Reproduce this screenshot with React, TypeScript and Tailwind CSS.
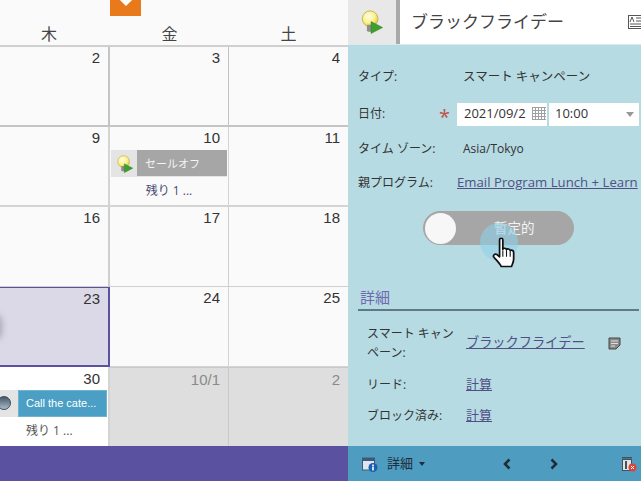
import React from 'react';

const font = "font-['Open_Sans','Noto_Sans_CJK_JP',sans-serif]";

const BulbIcon = ({ size = 26 }: { size?: number }) => (
  <svg width={size} height={size} viewBox="0 0 26 26">
    <defs>
      <radialGradient id="bulb" cx="0.4" cy="0.35" r="0.7">
        <stop offset="0" stopColor="#fffde0" />
        <stop offset="0.6" stopColor="#fbf08c" />
        <stop offset="1" stopColor="#dcbc3c" />
      </radialGradient>
    </defs>
    <circle cx="11" cy="9.5" r="8.5" fill="url(#bulb)" stroke="#c9b04a" strokeWidth="1" />
    <rect x="7.5" y="16" width="6" height="7.5" rx="1.5" fill="#8d9088" />
    <path d="M12 12.5 L24.5 19 L12 25.5 Z" fill="#3f9e2c" stroke="#2f7f20" strokeWidth="0.5" />
  </svg>
);

const DayCell = ({
  day,
  children,
  className = '',
  numClass = 'text-[#333]',
}: {
  day: string;
  children?: React.ReactNode;
  className?: string;
  numClass?: string;
}) => (
  <div className={`flex flex-col min-w-0 ${className}`}>
    <div className={`text-right text-[15px] leading-[20px] pt-[1px] pr-[8px] font-['Liberation_Sans',sans-serif] ${numClass}`}>{day}</div>
    {children}
  </div>
);

const More = ({ className = '' }: { className?: string }) => (
  <div className={`text-[12px] leading-[14px] text-[#4a4a72] ${className}`}>残り 1 ...</div>
);

const Row = ({ label, children, className = '' }: { label: string; children: React.ReactNode; className?: string }) => (
  <div className={`flex items-center ${className}`}>
    <span className="w-[105px] shrink-0 text-[#333]">{label}</span>
    {children}
  </div>
);

const Calendar = () => (
  <div className="w-[348px] shrink-0 flex flex-col bg-[#fafafa] overflow-hidden">
    <div className="h-[47px] relative shrink-0 border-b-2 border-[#cfcfcf]">
      <div className="absolute left-[110px] top-0 w-[31px] h-[16px] bg-[#e97a1c] flex justify-center">
        <div className="w-[10px] h-[10px] bg-white rotate-45 -mt-[6px]" />
      </div>
      <div className="absolute bottom-0 inset-x-0 grid grid-cols-[110px_119px_119px] text-center text-[16px] leading-[22px] text-[#444]">
        <span className="pr-[12px]">木</span>
        <span>金</span>
        <span>土</span>
      </div>
    </div>
    <div className="flex-1 grid grid-cols-[110px_119px_119px] grid-rows-[80px_80px_80px_80px_79px]">
      <DayCell day="2" className="border-r-2 border-b-2 border-[#c4c4c4]" />
      <DayCell day="3" className="border-r border-b-2 border-[#c4c4c4]" />
      <DayCell day="4" className="border-b-2 border-[#c4c4c4]" />

      <DayCell day="9" className="border-r-2 border-b-2 border-[#d4d4d4]" />
      <DayCell day="10" className="border-r border-b-2 border-[#d4d4d4]">
        <div className="flex h-[27px] mt-[2px] ml-[1px] mr-[1px] bg-[#e4e4e4]">
          <div className="w-[26px] shrink-0 flex items-center justify-center pl-[2px]">
            <BulbIcon size={18} />
          </div>
          <div className="flex-1 bg-[#a6a6a6] text-[#f4f4f4] text-[11px] leading-[27px] pl-[8px] mb-[1px]">セールオフ</div>
        </div>
        <More className="text-center mt-[7px]" />
      </DayCell>
      <DayCell day="11" className="border-b-2 border-[#d4d4d4]" />

      <DayCell day="16" className="border-r-2 border-b border-[#cfcfcf]" />
      <DayCell day="17" className="border-r border-b border-[#cfcfcf]" />
      <DayCell day="18" className="border-b border-[#cfcfcf]" />

      <div className="relative overflow-hidden border-t border-r-2 border-b-2 border-[#5a52a0] bg-[#dbd9e8]">
        <DayCell day="23" />
        <div className="absolute left-[-14px] top-[26px] w-[16px] h-[26px] rounded-full bg-[#a9a8b4] blur-[3px]" />
      </div>
      <DayCell day="24" className="border-r border-b border-[#d4d4d4]" />
      <DayCell day="25" className="border-b border-[#d4d4d4]" />

      <DayCell day="30" numClass="text-[#333] mt-[1px]" className="bg-white border-r-2 border-[#d4d4d4]">
        <div className="flex h-[27px] mt-[1px] mr-[1px] bg-[#e4e4e4]">
          <div className="w-[18px] shrink-0 relative overflow-hidden">
            <div className="absolute left-[-3px] top-[6px] w-[14px] h-[14px] rounded-full bg-gradient-to-b from-[#47586a] to-[#a9bccb] border border-[#3d4a58]" />
          </div>
          <div className="flex-1 bg-[#4b9fc4] text-white text-[11px] leading-[25px] pl-[7px] border border-[#6db4d3] font-['Liberation_Sans',sans-serif]">Call the cate...</div>
        </div>
        <More className="pl-[26px] text-[#555] mt-[7px]" />
      </DayCell>
      <DayCell day="10/1" numClass="text-[#8a8a8a] mt-[1px]" className="bg-[#dedede] border-r border-t border-[#c9c9c9]" />
      <DayCell day="2" numClass="text-[#8a8a8a] mt-[1px]" className="bg-[#dedede] border-t border-[#c9c9c9]" />
    </div>
    <div className="h-[35px] shrink-0 bg-[#5a52a0]" />
  </div>
);

const Panel = () => (
  <div className="flex-1 min-w-0 flex flex-col bg-[#b6dbe3] text-[12px] overflow-hidden">
    <div className="h-[45px] shrink-0 flex items-center bg-white border-b border-[#d8ecf0]">
      <div className="w-[52px] h-full shrink-0 bg-[#e8e8e8] border-r-[4px] border-[#a9a9a9] flex items-center justify-center">
        <BulbIcon size={24} />
      </div>
      <span className="ml-[11px] text-[17px] text-[#444] flex-1 whitespace-nowrap">ブラックフライデー</span>
      <svg width="14" height="16" viewBox="0 0 14 16" className="shrink-0 -mr-[1px]">
        <rect x="0.5" y="1.5" width="14" height="13" fill="#fff" stroke="#555" />
        <path d="M2 8 L4 3 L6 8 M8 4 H13 M8 7 H13 M2 10 H13 M2 12.5 H13" fill="none" stroke="#555" />
      </svg>
    </div>
    <div className="flex-1 flex flex-col">
      <div className="flex flex-col pl-[10px]">
        <Row label="タイプ:" className="mt-[22px] h-[20px]">
          <span className="text-[#333] text-[12.5px]">スマート キャンペーン</span>
        </Row>
        <div className="flex items-center mt-[14px] h-[26px]">
          <span className="w-[81px] shrink-0 text-[#333]">日付:</span>
          <span className="w-[18px] text-[20px] leading-[20px] text-[#c0504d] pt-[6px]">*</span>
          <div className="w-[90px] h-[23px] bg-white flex items-center pl-[7px] overflow-hidden relative text-[#333] text-[13px]">
            <span className="whitespace-nowrap">2021/09/2</span>
            <svg width="16" height="16" viewBox="0 0 16 16" className="absolute right-0 top-[3px] bg-white">
              <path d="M1 1.5H15M1 4.5H15M1 7.5H15M1 10.5H15M1 13.5H15M1.5 1V14M4.5 1V14M7.5 1V14M10.5 1V14M13.5 1V14" stroke="#a0a0a0" />
            </svg>
          </div>
          <div className="ml-[2px] flex-1 mr-[2px] h-[23px] bg-white flex items-center pl-[6px] pr-[5px] justify-between text-[#333] text-[13px]">
            <span>10:00</span>
            <span className="w-0 h-0 border-x-[4px] border-x-transparent border-t-[5px] border-t-[#999]" />
          </div>
        </div>
        <Row label="タイム ゾーン:" className="mt-[12px] h-[20px]">
          <span className="text-[#333]">Asia/Tokyo</span>
        </Row>
        <div className="flex items-center mt-[13px] h-[22px]">
          <span className="w-[99px] shrink-0 text-[#333]">親プログラム:</span>
          <span className="text-[#514f85] underline whitespace-nowrap text-[13.2px]">Email Program Lunch + Learn</span>
        </div>
      </div>
      <div className="relative self-start ml-[75px] mt-[17px] w-[151px] h-[34px] rounded-full bg-[#a6a6a6] flex items-center border border-[#a6a6a6]">
        <div className="ml-[1px] w-[31px] h-[31px] rounded-full bg-[#f7f7f7]" />
        <span className="ml-[38px] text-[#f4f4f4] text-[13.5px]">暫定的</span>
        <div className="absolute left-[56px] top-[11px] w-[38px] h-[38px] rounded-full bg-[#8fd0e8]/60" />
        <svg width="26" height="33" viewBox="0 0 24 30" className="absolute left-[68px] top-[25px]">
          <path
            d="M7 2.2 C7 0.5 10 0.5 10 2.2 V11 C10.5 9.8 13 9.8 13.4 11.5 C14 10.4 16.4 10.6 16.8 12.4 C17.6 11.6 20 12 20 14 V20 C20 23 18.6 25 18 27 H8.5 C7.5 24.5 4.5 21.5 1.8 18.5 C0.5 17 2.5 14.6 4.6 16 L7 18 Z"
            fill="#fff"
            stroke="#111"
            strokeWidth="1.6"
            strokeLinejoin="round"
          />
          <path d="M10 12 V18 M13.4 12 V18 M16.8 13 V18" stroke="#111" strokeWidth="1" />
        </svg>
      </div>
      <div className="mt-[41px] ml-[10px] mr-[2px] border-b-2 border-[#5f7a82] text-[15px] leading-[22px] text-[#6f68ad] pl-[2px] pb-[1px]">
        詳細
      </div>
      <div className="flex flex-col pl-[19px] pr-[20px] mt-[13px]">
        <div className="flex items-center">
          <span className="w-[99px] shrink-0 leading-[19px] text-[#333]">スマート キャン<br />ペーン:</span>
          <span className="text-[#514f85] underline whitespace-nowrap flex-1 text-[13.2px]">ブラックフライデー</span>
          <svg width="13" height="13" viewBox="0 0 13 13" className="shrink-0">
            <path d="M1 1H12V8L8 12H1Z" fill="#8a8a8a" stroke="#444" />
            <path d="M3 4H10M3 6.5H10M3 9H7" stroke="#ddd" />
          </svg>
        </div>
        <div className="flex items-center mt-[13px] h-[20px]">
          <span className="w-[99px] shrink-0 text-[#333]">リード:</span>
          <span className="text-[#514f85] underline text-[13px]">計算</span>
        </div>
        <div className="flex items-center mt-[11px] h-[20px]">
          <span className="w-[99px] shrink-0 text-[#333]">ブロック済み:</span>
          <span className="text-[#514f85] underline text-[13px]">計算</span>
        </div>
      </div>
    </div>
    <div className="h-[35px] shrink-0 bg-[#4e9cc0] flex items-center pl-[14px] pr-[4px] text-[#1f2d3a] relative">
      <svg width="16" height="16" viewBox="0 0 16 16" className="shrink-0">
        <rect x="0.5" y="2" width="12" height="12" fill="#dfe7ee" stroke="#3f5a78" />
        <rect x="0.5" y="2" width="12" height="3" fill="#3f5a78" />
        <circle cx="11" cy="11.5" r="4.5" fill="#1b5fb0" />
        <rect x="10.2" y="8.5" width="1.6" height="1.5" fill="#fff" />
        <rect x="10.2" y="10.5" width="1.6" height="4" fill="#fff" />
      </svg>
      <span className="ml-[9px] text-[13px]">詳細</span>
      <span className="ml-[6px] w-0 h-0 border-x-[3px] border-x-transparent border-t-[4px] border-t-[#1f2d3a]" />
      <svg width="10" height="12" viewBox="0 0 10 12" className="ml-[77px] shrink-0">
        <path d="M7.5 1.5 L3 6 L7.5 10.5" fill="none" stroke="#1f2d3a" strokeWidth="2.6" />
      </svg>
      <svg width="10" height="12" viewBox="0 0 10 12" className="ml-[37px] shrink-0">
        <path d="M2.5 1.5 L7 6 L2.5 10.5" fill="none" stroke="#1f2d3a" strokeWidth="2.6" />
      </svg>
      <svg width="16" height="16" viewBox="0 0 16 16" className="ml-auto shrink-0">
        <rect x="1" y="1" width="10" height="1.5" fill="#44505c" />
        <rect x="1.5" y="3.5" width="9" height="11" fill="#dfe3e6" stroke="#44505c" />
        <path d="M5 5V13" stroke="#44505c" strokeWidth="2" />
        <circle cx="11.5" cy="11.5" r="4" fill="#d9453a" />
        <path d="M10 10L13 13M13 10L10 13" stroke="#fff" />
      </svg>
    </div>
  </div>
);

const App: React.FC = () => {
  return (
    <div className={`flex w-[641px] h-[481px] overflow-hidden ${font}`}>
      <Calendar />
      <Panel />
    </div>
  );
};

export default App;
